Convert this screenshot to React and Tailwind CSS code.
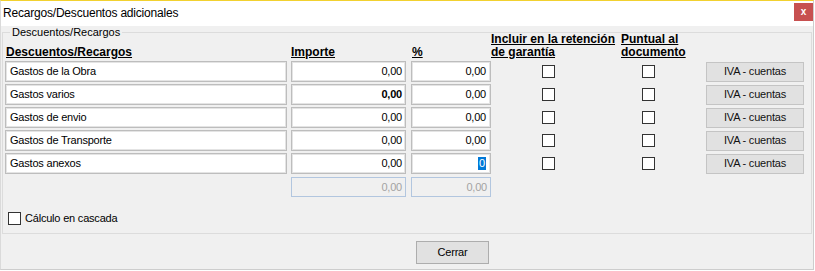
import React from "react";

const rows = [
  { name: "Gastos de la Obra" },
  { name: "Gastos varios", bold: true },
  { name: "Gastos de envio" },
  { name: "Gastos de Transporte" },
  { name: "Gastos anexos", focus: true },
];

function Box() {
  return <div className="w-[13px] h-[13px] bg-white border border-[#333333]" />;
}

function IvaButton() {
  return (
    <div className="w-[98px] h-[20px] bg-[#e1e1e1] border border-[#c4c4c4] flex items-center justify-center text-[11px] tracking-[-0.2px] text-[#111]">
      IVA - cuentas
    </div>
  );
}

export default function App() {
  return (
    <div className="w-[815px] h-[271px] bg-white font-['Liberation_Sans',Arial,sans-serif] text-black">
      <div className="w-[814px] h-[270px] bg-[#f0f0f0] border-t border-t-[#f2d12f] border-l border-l-[#dadada] border-r border-r-[#cdcdcd] border-b border-b-[#cdcdcd] flex flex-col">
        {/* title bar */}
        <div className="h-[25px] bg-white flex items-start pl-[2px] pr-0">
          <div className="text-[12px] tracking-[-0.2px] leading-[25px] flex-1">Recargos/Descuentos adicionales</div>
          <div className="mt-[2px] w-[19px] h-[18px] bg-[#c75050] flex items-center justify-center text-white text-[10px] font-bold leading-none">
            x
          </div>
        </div>

        {/* group box */}
        <div className="relative mt-[6px] ml-[1px] w-[810px] h-[202px] border border-[#dcdcdc] flex flex-col">
          <span className="absolute top-[-7px] left-[7px] px-[2px] bg-[#f0f0f0] text-[11px] leading-[13px]">
            Descuentos/Recargos
          </span>

          {/* headers */}
          <div className="pl-[2px] flex items-end h-[26px] text-[12px] font-bold leading-[13px] underline">
            <div className="w-[282px] pl-[1px]">Descuentos/Recargos</div>
            <div className="ml-[4px] w-[115px]">Importe</div>
            <div className="ml-[5px] w-[80px] pl-[1px]">%</div>
            <div className="w-[130px]">
              Incluir en la retención
              <br />
              de garantía
            </div>
            <div className="w-[85px]">
              Puntual al
              <br />
              documento
            </div>
          </div>

          {/* rows */}
          <div className="mt-[2px] pl-[2px] flex flex-col gap-[2px] text-[11px] tracking-[-0.2px]">
            {rows.map((r) => (
              <div key={r.name} className="flex items-center h-[21px]">
                <div className="w-[282px] h-[21px] bg-white border border-[#bdbdbd] shadow-[inset_0_0_0_1px_#e4e4e4] pl-[4px] leading-[19px]">
                  {r.name}
                </div>
                <div
                  className={
                    "ml-[4px] w-[115px] h-[21px] bg-white border border-[#bdbdbd] shadow-[inset_0_0_0_1px_#e4e4e4] pr-[3px] text-right leading-[19px] " +
                    (r.bold ? "font-bold" : "")
                  }
                >
                  0,00
                </div>
                <div className="ml-[5px] w-[80px] h-[21px] bg-white border border-[#bdbdbd] shadow-[inset_0_0_0_1px_#e4e4e4] pr-[4px] flex items-center justify-end leading-[19px]">
                  {r.focus ? (
                    <span className="bg-[#0078d7] text-white px-[1px] leading-[13px]">0</span>
                  ) : (
                    "0,00"
                  )}
                </div>
                <div className="w-[130px] pl-[51px] flex items-center">
                  <Box />
                </div>
                <div className="w-[85px] pl-[21px] flex items-center">
                  <Box />
                </div>
                <IvaButton />
              </div>
            ))}

            {/* totals */}
            <div className="flex items-center h-[21px]">
              <div className="w-[282px]" />
              <div className="ml-[4px] w-[115px] h-[20px] bg-[#f0f0f0] border border-[#b2c6df] pr-[3px] text-right leading-[18px] text-[#a3a3a3]">
                0,00
              </div>
              <div className="ml-[5px] w-[80px] h-[20px] bg-[#f0f0f0] border border-[#b2c6df] pr-[3px] text-right leading-[18px] text-[#a3a3a3]">
                0,00
              </div>
            </div>

            {/* cascade */}
            <div className="mt-[12px] flex items-center h-[15px] pl-[3px] gap-[4px]">
              <Box />
              <span>Cálculo en cascada</span>
            </div>
          </div>
        </div>

        {/* bottom */}
        <div className="mt-[7px] pl-[415px]">
          <div className="w-[73px] h-[23px] bg-[#e1e1e1] border border-[#adadad] flex items-center justify-center text-[11px] tracking-[-0.2px]">
            Cerrar
          </div>
        </div>
      </div>
    </div>
  );
}
